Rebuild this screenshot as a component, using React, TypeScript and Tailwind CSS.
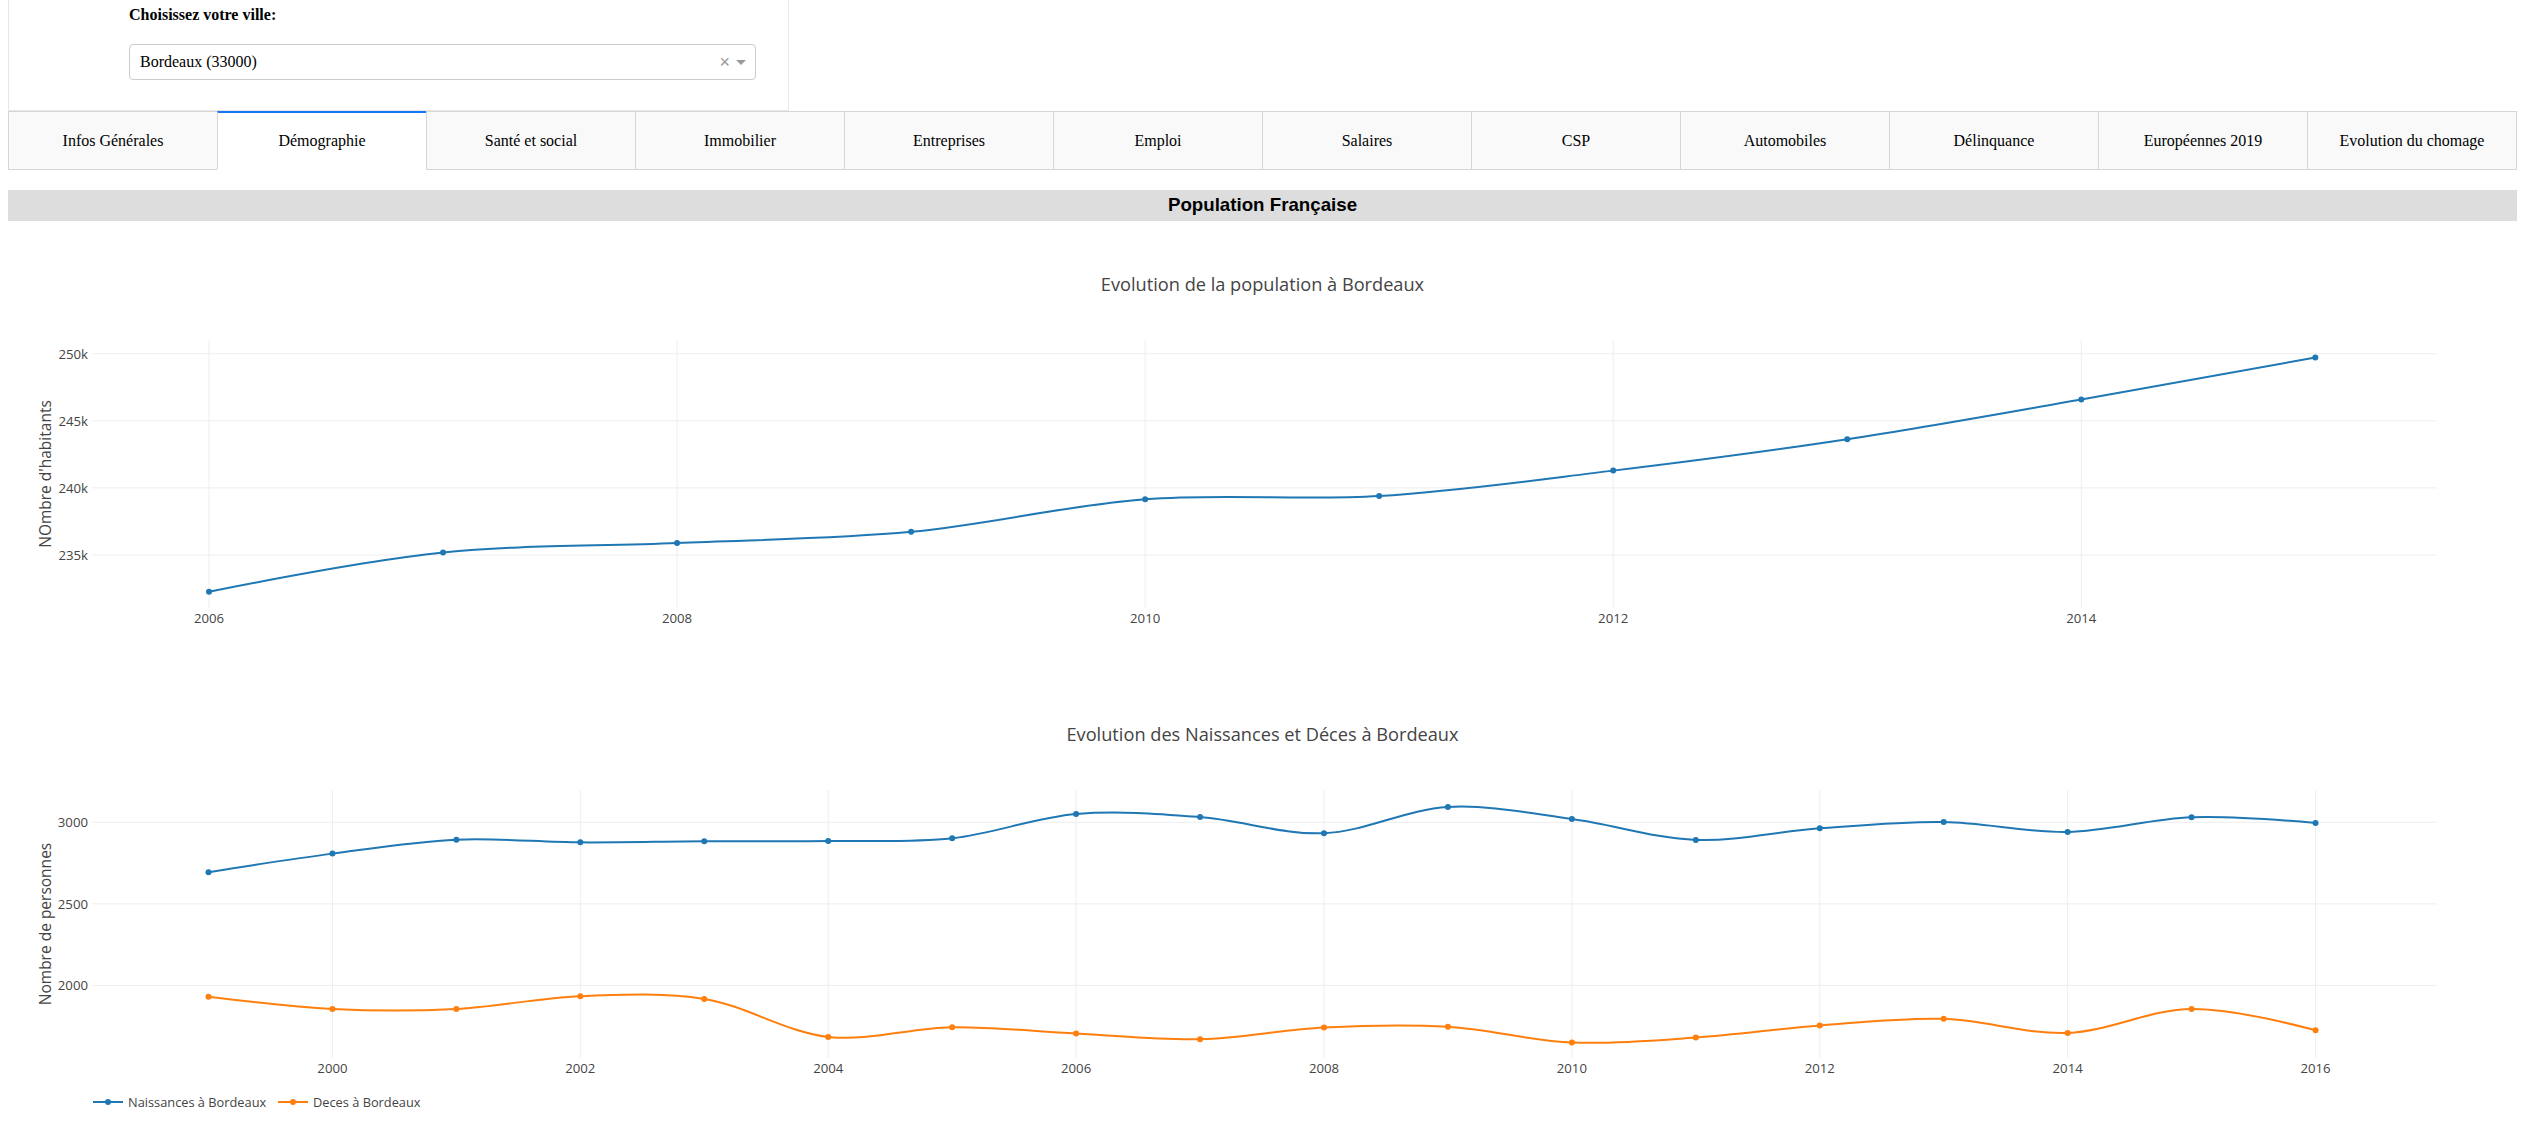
import React from 'react';

type Pt = [number, number];

type Series = { name: string; color: string; values: number[] };

type ChartProps = {
  title: string;
  yTitle: string;
  years: number[];
  series: Series[];
  xRange: [number, number];
  yRange: [number, number];
  xTicks: number[];
  yTicks: number[];
  yFmt: (v: number) => string;
  legend?: boolean;
};

const TABS = [
  'Infos Générales',
  'Démographie',
  'Santé et social',
  'Immobilier',
  'Entreprises',
  'Emploi',
  'Salaires',
  'CSP',
  'Automobiles',
  'Délinquance',
  'Européennes 2019',
  'Evolution du chomage',
];

// plot area inside each 2509x450 chart
const W = 2509;
const H = 450;
const L = 84;
const R = 2429;
const T = 100;
const B = 368;

// same smoothing as plotly's "spline" line shape
function tangent(p0: Pt, p1: Pt, p2: Pt, s = 1): [Pt, Pt] {
  const d1x = p0[0] - p1[0];
  const d1y = p0[1] - p1[1];
  const d2x = p2[0] - p1[0];
  const d2y = p2[1] - p1[1];
  const d1a = Math.pow(d1x * d1x + d1y * d1y, 0.25);
  const d2a = Math.pow(d2x * d2x + d2y * d2y, 0.25);
  const numx = (d2a * d2a * d1x - d1a * d1a * d2x) * s;
  const numy = (d2a * d2a * d1y - d1a * d1a * d2y) * s;
  const den1 = 3 * d2a * (d1a + d2a);
  const den2 = 3 * d1a * (d1a + d2a);
  return [
    [p1[0] + (den1 && numx / den1), p1[1] + (den1 && numy / den1)],
    [p1[0] - (den2 && numx / den2), p1[1] - (den2 && numy / den2)],
  ];
}

function splinePath(pts: Pt[]) {
  const f = (p: Pt) => `${p[0].toFixed(2)},${p[1].toFixed(2)}`;
  if (pts.length < 3) return 'M' + pts.map(f).join('L');
  const tg: [Pt, Pt][] = [];
  for (let i = 1; i < pts.length - 1; i++) tg.push(tangent(pts[i - 1], pts[i], pts[i + 1]));
  let d = 'M' + f(pts[0]) + 'Q' + f(tg[0][0]) + ' ' + f(pts[1]);
  for (let i = 2; i < pts.length - 1; i++) {
    d += 'C' + f(tg[i - 2][1]) + ' ' + f(tg[i - 1][0]) + ' ' + f(pts[i]);
  }
  d += 'Q' + f(tg[pts.length - 3][1]) + ' ' + f(pts[pts.length - 1]);
  return d;
}

function LineChart({ title, yTitle, years, series, xRange, yRange, xTicks, yTicks, yFmt, legend }: ChartProps) {
  const sx = (v: number) => L + ((v - xRange[0]) / (xRange[1] - xRange[0])) * (R - L);
  const sy = (v: number) => B - ((v - yRange[0]) / (yRange[1] - yRange[0])) * (B - T);
  return (
    <svg width={W} height={H} className="block font-['Open_Sans',Verdana,Arial,sans-serif]">
      <text x={W / 2} y={44} fontSize={18.2} fill="#444" textAnchor="middle" dominantBaseline="central">
        {title}
      </text>
      {xTicks.map((t) => (
        <line key={`vx${t}`} x1={sx(t)} x2={sx(t)} y1={T} y2={B} stroke="#eeeeee" strokeWidth={1} />
      ))}
      {yTicks.map((t) => (
        <line key={`hy${t}`} x1={L} x2={R} y1={sy(t)} y2={sy(t)} stroke="#eeeeee" strokeWidth={1} />
      ))}
      {xTicks.map((t) => (
        <text key={`tx${t}`} x={sx(t)} y={378} fontSize={13.2} fill="#444" textAnchor="middle" dominantBaseline="central">
          {t}
        </text>
      ))}
      {yTicks.map((t) => (
        <text key={`ty${t}`} x={80} y={sy(t)} fontSize={13.2} fill="#444" textAnchor="end" dominantBaseline="central">
          {yFmt(t)}
        </text>
      ))}
      <text
        x={37}
        y={(T + B) / 2}
        fontSize={15.5}
        fill="#444"
        textAnchor="middle"
        dominantBaseline="central"
        transform={`rotate(-90 37 ${(T + B) / 2})`}
      >
        {yTitle}
      </text>
      {series.map((s) => {
        const pts: Pt[] = s.values.map((v, i) => [sx(years[i]), sy(v)]);
        return (
          <g key={s.name}>
            <path d={splinePath(pts)} fill="none" stroke={s.color} strokeWidth={2} />
            {pts.map((p, i) => (
              <circle key={i} cx={p[0]} cy={p[1]} r={3} fill={s.color} />
            ))}
          </g>
        );
      })}
      {legend && (
        <g>
          {series.map((s, i) => {
            const x0 = i === 0 ? 80 : 265;
            return (
              <g key={s.name}>
                <line x1={x0 + 5} x2={x0 + 35} y1={412} y2={412} stroke={s.color} strokeWidth={2} />
                <circle cx={x0 + 20} cy={412} r={3} fill={s.color} />
                <text x={x0 + 40} y={412} fontSize={12.8} fill="#444" dominantBaseline="central">
                  {s.name}
                </text>
              </g>
            );
          })}
        </g>
      )}
    </svg>
  );
}

const popYears = [2006, 2007, 2008, 2009, 2010, 2011, 2012, 2013, 2014, 2015];
const population = [232260, 235178, 235891, 236725, 239157, 239399, 241287, 243626, 246586, 249712];

const natYears = Array.from({ length: 18 }, (_, i) => 1999 + i);
const naissances = [2694, 2808, 2893, 2877, 2884, 2885, 2902, 3051, 3032, 2933, 3094, 3020, 2892, 2963, 3002, 2941, 3031, 2996];
const deces = [1931, 1856, 1856, 1934, 1917, 1684, 1744, 1705, 1670, 1742, 1746, 1650, 1680, 1754, 1795, 1709, 1856, 1725];

export default function App() {
  return (
    <div className="w-[2525px] bg-white text-black font-['Liberation_Serif','Times_New_Roman',serif]">
      <div className="px-2">
        <div className="w-[781px] h-[111px] border-x border-b border-[#e6e6e6] pl-[120px] pr-[32px] pt-[5px]">
          <label className="block text-base font-bold leading-[19px]">Choisissez votre ville:</label>
          <div className="mt-[20px] h-[36px] rounded border border-[#cccccc] bg-white flex items-center pl-[10px] pr-[9px]">
            <span className="flex-1 text-base">Bordeaux (33000)</span>
            <span className="text-[18px] leading-none text-[#999999] font-['Liberation_Sans',Arial,sans-serif] mr-[6px]">×</span>
            <span className="w-0 h-0 border-x-[5px] border-x-transparent border-t-[5px] border-t-[#999999]" />
          </div>
        </div>

        <div className="flex">
          {TABS.map((t, i) => {
            const active = t === 'Démographie';
            return (
              <div
                key={t}
                className={`flex-1 h-[59px] flex items-center justify-center text-base border-l ${
                  i === TABS.length - 1 ? 'border-r' : ''
                } border-[#d6d6d6] ${
                  active
                    ? 'bg-white border-t-2 border-t-[#1975FA] border-b border-b-white'
                    : 'bg-[#f9f9f9] border-t border-b'
                }`}
              >
                {t}
              </div>
            );
          })}
        </div>

        <div className="mt-[20px] h-[31px] bg-[#dddddd] flex items-center justify-center">
          <h3 className="text-[18.72px] font-bold font-['Liberation_Sans',Arial,sans-serif]">Population Française</h3>
        </div>

        <div className="mt-[19px]">
          <LineChart
            title="Evolution de la population à Bordeaux"
            yTitle="NOmbre d'habitants"
            years={popYears}
            series={[{ name: 'Population', color: '#1f77b4', values: population }]}
            xRange={[2005.5, 2015.52]}
            yRange={[231050, 251020]}
            xTicks={[2006, 2008, 2010, 2012, 2014]}
            yTicks={[235000, 240000, 245000, 250000]}
            yFmt={(v) => `${v / 1000}k`}
          />
          <LineChart
            title="Evolution des Naissances et Déces à Bordeaux"
            yTitle="Nombre de personnes"
            years={natYears}
            series={[
              { name: 'Naissances à Bordeaux', color: '#1f77b4', values: naissances },
              { name: 'Deces à Bordeaux', color: '#ff7f0e', values: deces },
            ]}
            xRange={[1998.06, 2016.98]}
            yRange={[1555, 3198]}
            xTicks={[2000, 2002, 2004, 2006, 2008, 2010, 2012, 2014, 2016]}
            yTicks={[2000, 2500, 3000]}
            yFmt={(v) => `${v}`}
            legend
          />
        </div>
      </div>
    </div>
  );
}
